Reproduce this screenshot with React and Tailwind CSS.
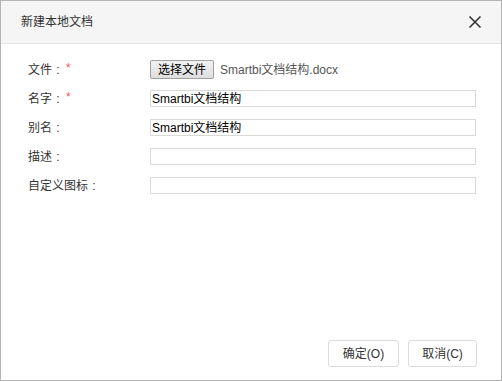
import React from 'react';

const FONT = { fontFamily: '"Liberation Sans", "Noto Sans CJK SC", sans-serif' };

const Field = ({ label, required, children }) => (
  <div className="flex items-center h-[29px]">
    <label className="w-[122px] shrink-0 flex items-center text-[12px] text-[#333]">
      {label}
      <span className="inline-block w-[12px] text-center">:</span>
      {required && <span className="text-[#f55] ml-[2px] -mt-[3px]">*</span>}
    </label>
    <div className="flex-1 flex items-center">{children}</div>
  </div>
);

const TextInput = ({ value }) => (
  <input
    readOnly
    defaultValue={value}
    className="w-[326px] h-[17px] border border-[#d9d9d6] bg-white px-[1px] text-[12px] text-black outline-none"
    style={FONT}
  />
);

export default function App() {
  return (
    <div className="w-[502px] h-[382px] bg-white" style={FONT}>
      <div className="w-full h-[381px] border border-[#b4b4b4] flex flex-col">
        <div className="h-[43px] shrink-0 bg-[#f5f5f5] border-b border-[#e4e4e4] flex items-center justify-between pl-[20px] pr-[19px]">
          <span className="text-[12px] text-[#333]">新建本地文档</span>
          <svg width="14" height="14" viewBox="0 0 14 14">
            <path d="M1.5 1.5 L12.5 12.5 M12.5 1.5 L1.5 12.5" stroke="#333" strokeWidth="1.6" />
          </svg>
        </div>

        <div className="flex-1 pl-[27px] pt-[11px]">
          <Field label="文件" required>
            <button className="h-[19px] px-[7px] border border-[#a0a0a0] rounded-[2px] bg-gradient-to-b from-[#f2f2f2] to-[#dedede] text-[12px] text-black leading-none">
              选择文件
            </button>
            <span className="ml-[6px] text-[12px] text-[#555]">Smartbi文档结构.docx</span>
          </Field>
          <Field label="名字" required>
            <TextInput value="Smartbi文档结构" />
          </Field>
          <Field label="别名">
            <TextInput value="Smartbi文档结构" />
          </Field>
          <Field label="描述">
            <TextInput value="" />
          </Field>
          <Field label="自定义图标">
            <TextInput value="" />
          </Field>
        </div>

        <div className="shrink-0 flex justify-end items-end gap-[9px] pr-[24px] pb-[13px]">
          <button className="w-[71px] h-[27px] border border-[#dcdcdc] rounded-[3px] bg-white text-[12px] text-[#333]">
            确定(O)
          </button>
          <button className="w-[69px] h-[27px] border border-[#dcdcdc] rounded-[3px] bg-white text-[12px] text-[#333]">
            取消(C)
          </button>
        </div>
      </div>
    </div>
  );
}
